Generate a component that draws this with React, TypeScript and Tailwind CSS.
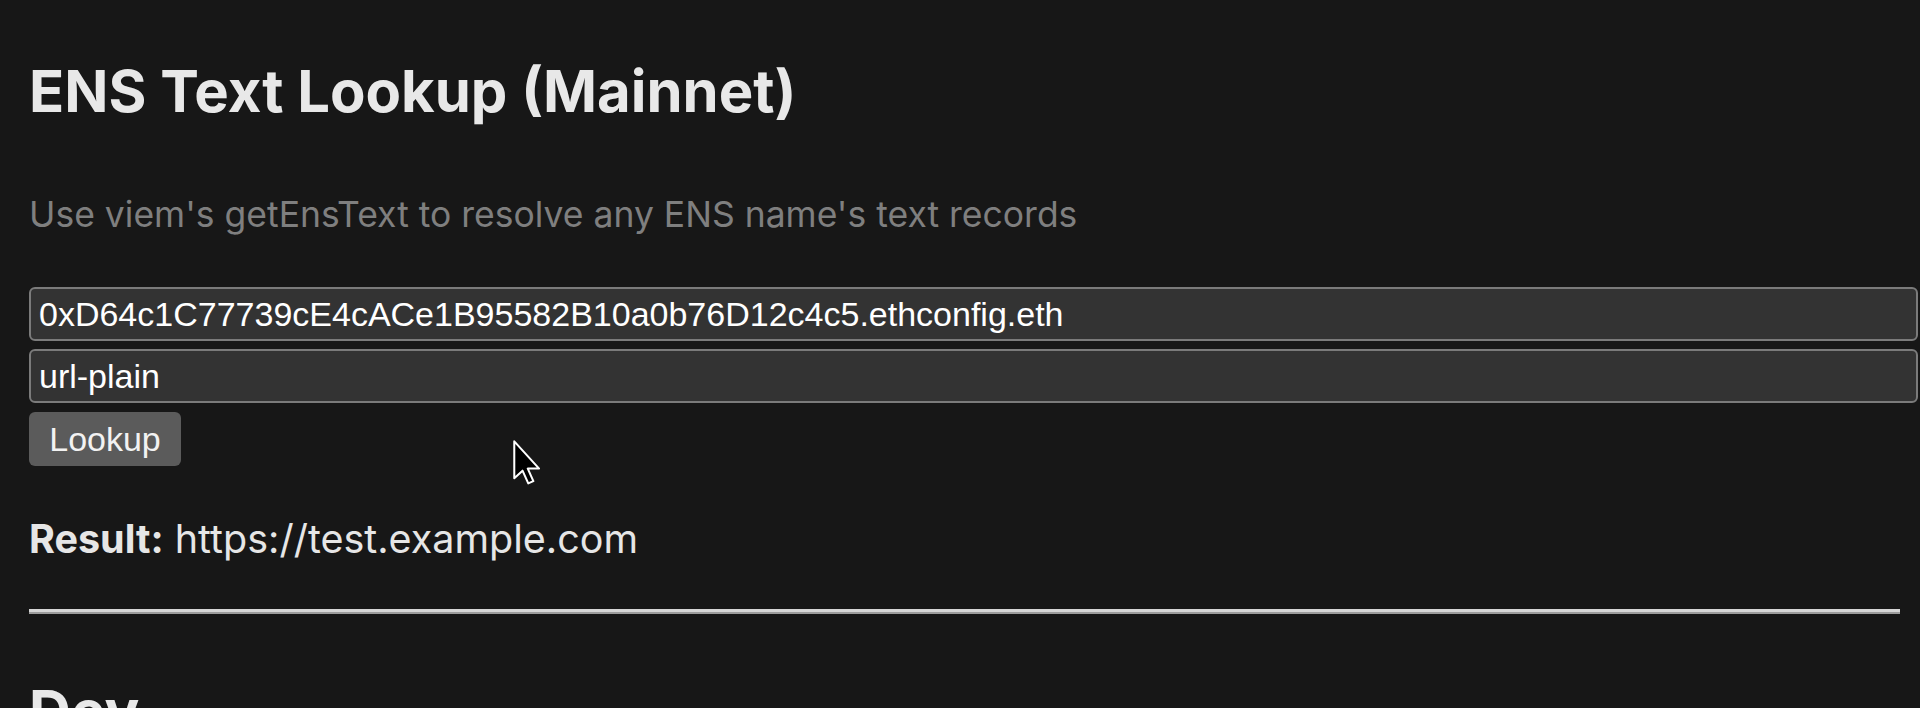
import { useState } from "react";

// ENS text record lookup page, dark theme, rendered at a large zoom level
export default function App() {
  const [name, setName] = useState(
    "0xD64c1C77739cE4cACe1B95582B10a0b76D12c4c5.ethconfig.eth",
  );
  const [key, setKey] = useState("url-plain");
  const result = "https://test.example.com";

  return (
    <div className="relative min-h-[708px] overflow-hidden bg-[#171717] pl-[29px] pr-[20px] font-['Inter',sans-serif] text-[#e6e6e6]">
      <h1 className="pt-[56px] text-[58px] font-bold leading-[70px] text-[#e8e8e8]">
        ENS Text Lookup (Mainnet)
      </h1>

      <p className="mt-[68px] text-[35.5px] leading-[42px] text-[#7f7f7f]">
        Use viem's getEnsText to resolve any ENS name's text records
      </p>

      <div className="mt-[51px] flex flex-col">
        <input
          value={name}
          onChange={(e) => setName(e.target.value)}
          className="block h-[54px] w-[calc(100%+18px)] rounded-[6px] border-2 border-[#7b7b7b] bg-[#333333] px-[8px] font-['Liberation_Sans',Arial,sans-serif] text-[34px] text-white outline-none"
        />
        <input
          value={key}
          onChange={(e) => setKey(e.target.value)}
          className="mt-[8px] block h-[54px] w-[calc(100%+18px)] rounded-[6px] border-2 border-[#7b7b7b] bg-[#333333] px-[8px] font-['Liberation_Sans',Arial,sans-serif] text-[34px] text-white outline-none"
        />
        <button className="mt-[9px] flex h-[54px] w-[152px] items-center justify-center rounded-[6px] bg-[#5b5b5b] font-['Liberation_Sans',Arial,sans-serif] text-[34px] text-[#f2f2f2]">
          Lookup
        </button>
      </div>

      <p className="mt-[50px] text-[39.5px] leading-[46px] text-[#e6e6e6]">
        <span className="font-bold">Result:</span> {result}
      </p>

      <div className="mt-[47px] h-[5px] border-t-[3px] border-b-[2px] border-t-[#d6d6d6] border-b-[#9c9c9c]" />

      <h2 className="mt-[62px] text-[58px] font-bold leading-[70px] text-[#e8e8e8]">
        Dev
      </h2>

      {/* mouse pointer captured in the screenshot */}
      <svg
        className="pointer-events-none absolute left-[513px] top-[440px]"
        width="28"
        height="46"
        viewBox="0 0 22 36"
        aria-hidden
      >
        <path
          d="M1 1 L1 30 L7.5 24 L12 34 L16 32.2 L11.6 22.4 L20.5 22.4 Z"
          fill="#000"
          stroke="#fff"
          strokeWidth="1.6"
          strokeLinejoin="round"
        />
      </svg>
    </div>
  );
}
